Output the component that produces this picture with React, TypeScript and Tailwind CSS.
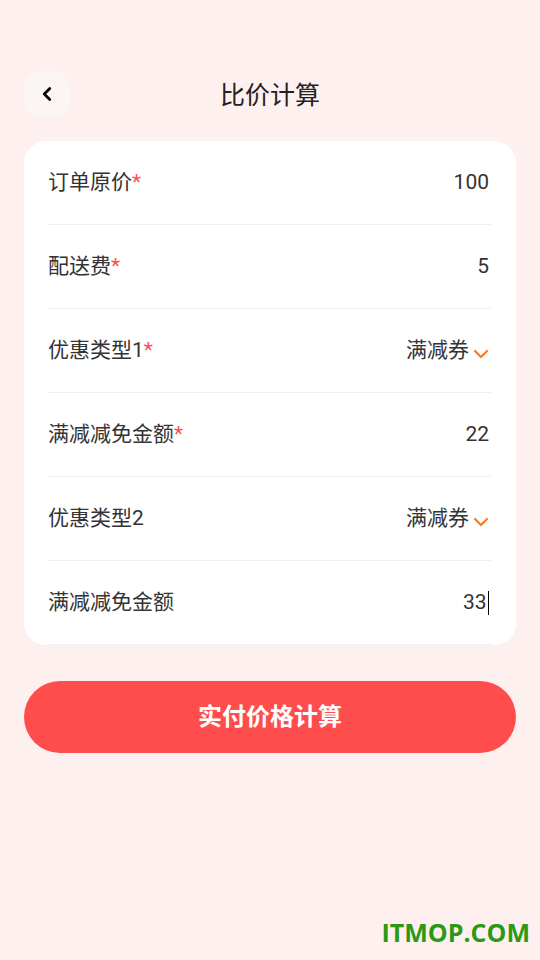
import { ChevronLeft } from 'lucide-react';

interface Row {
  label: string;
  required: boolean;
  value: string;
  select?: boolean;
  caret?: boolean;
}

const ROWS: Row[] = [
  { label: '订单原价', required: true, value: '100' },
  { label: '配送费', required: true, value: '5' },
  { label: '优惠类型1', required: true, value: '满减券', select: true },
  { label: '满减减免金额', required: true, value: '22' },
  { label: '优惠类型2', required: false, value: '满减券', select: true },
  { label: '满减减免金额', required: false, value: '33', caret: true },
];

function Caret() {
  return (
    <svg width="16" height="10" viewBox="0 0 16 10" className="ml-[4px] mt-[6px]">
      <path d="M2 2 L8 8 L14 2" fill="none" stroke="#ff7a1a" strokeWidth="2.2" strokeLinecap="round" strokeLinejoin="round" />
    </svg>
  );
}

export default function App() {
  return (
    <div
      className="relative min-h-[960px] w-full bg-[#fff0f0] px-[24px] pt-[70px]"
      style={{ fontFamily: 'Roboto, "Noto Sans CJK SC", sans-serif' }}
    >
      <header className="relative flex h-[48px] items-center justify-center">
        <button
          type="button"
          className="absolute left-0 top-[1px] flex h-[46px] w-[46px] items-center justify-center rounded-[18px] bg-[#fcf5f5] text-black"
        >
          <ChevronLeft size={22} strokeWidth={3} />
        </button>
        <h1 className="mt-[3px] text-[25px] font-normal text-[#222]">比价计算</h1>
      </header>

      <section className="mt-[23px] rounded-[22px] bg-white px-[24px]">
        {ROWS.map((r, i) => (
          <div
            key={i}
            className="flex h-[84px] items-center justify-between border-b border-[#f0f0f0] text-[21px] font-normal text-[#333]"
          >
            <span>
              {r.label}
              {r.required && <span className="text-[#ff4d4d]">*</span>}
            </span>
            <span className="flex items-center pr-[3px]">
              {r.value}
              {r.select && <Caret />}
              {r.caret && <span className="ml-[1px] inline-block h-[24px] w-[1.5px] bg-black" />}
            </span>
          </div>
        ))}
      </section>

      <button
        type="button"
        className="mt-[36px] flex h-[72px] w-full items-center justify-center rounded-full bg-[#ff4d4d] text-[24px] font-bold text-white"
      >
        实付价格计算
      </button>

      <div
        className="absolute bottom-[9px] right-[10px] text-[25px] font-bold text-[#2a9a16]"
        style={{ fontFamily: '"Open Sans", sans-serif' }}
      >
        ITMOP.COM
      </div>
    </div>
  );
}
